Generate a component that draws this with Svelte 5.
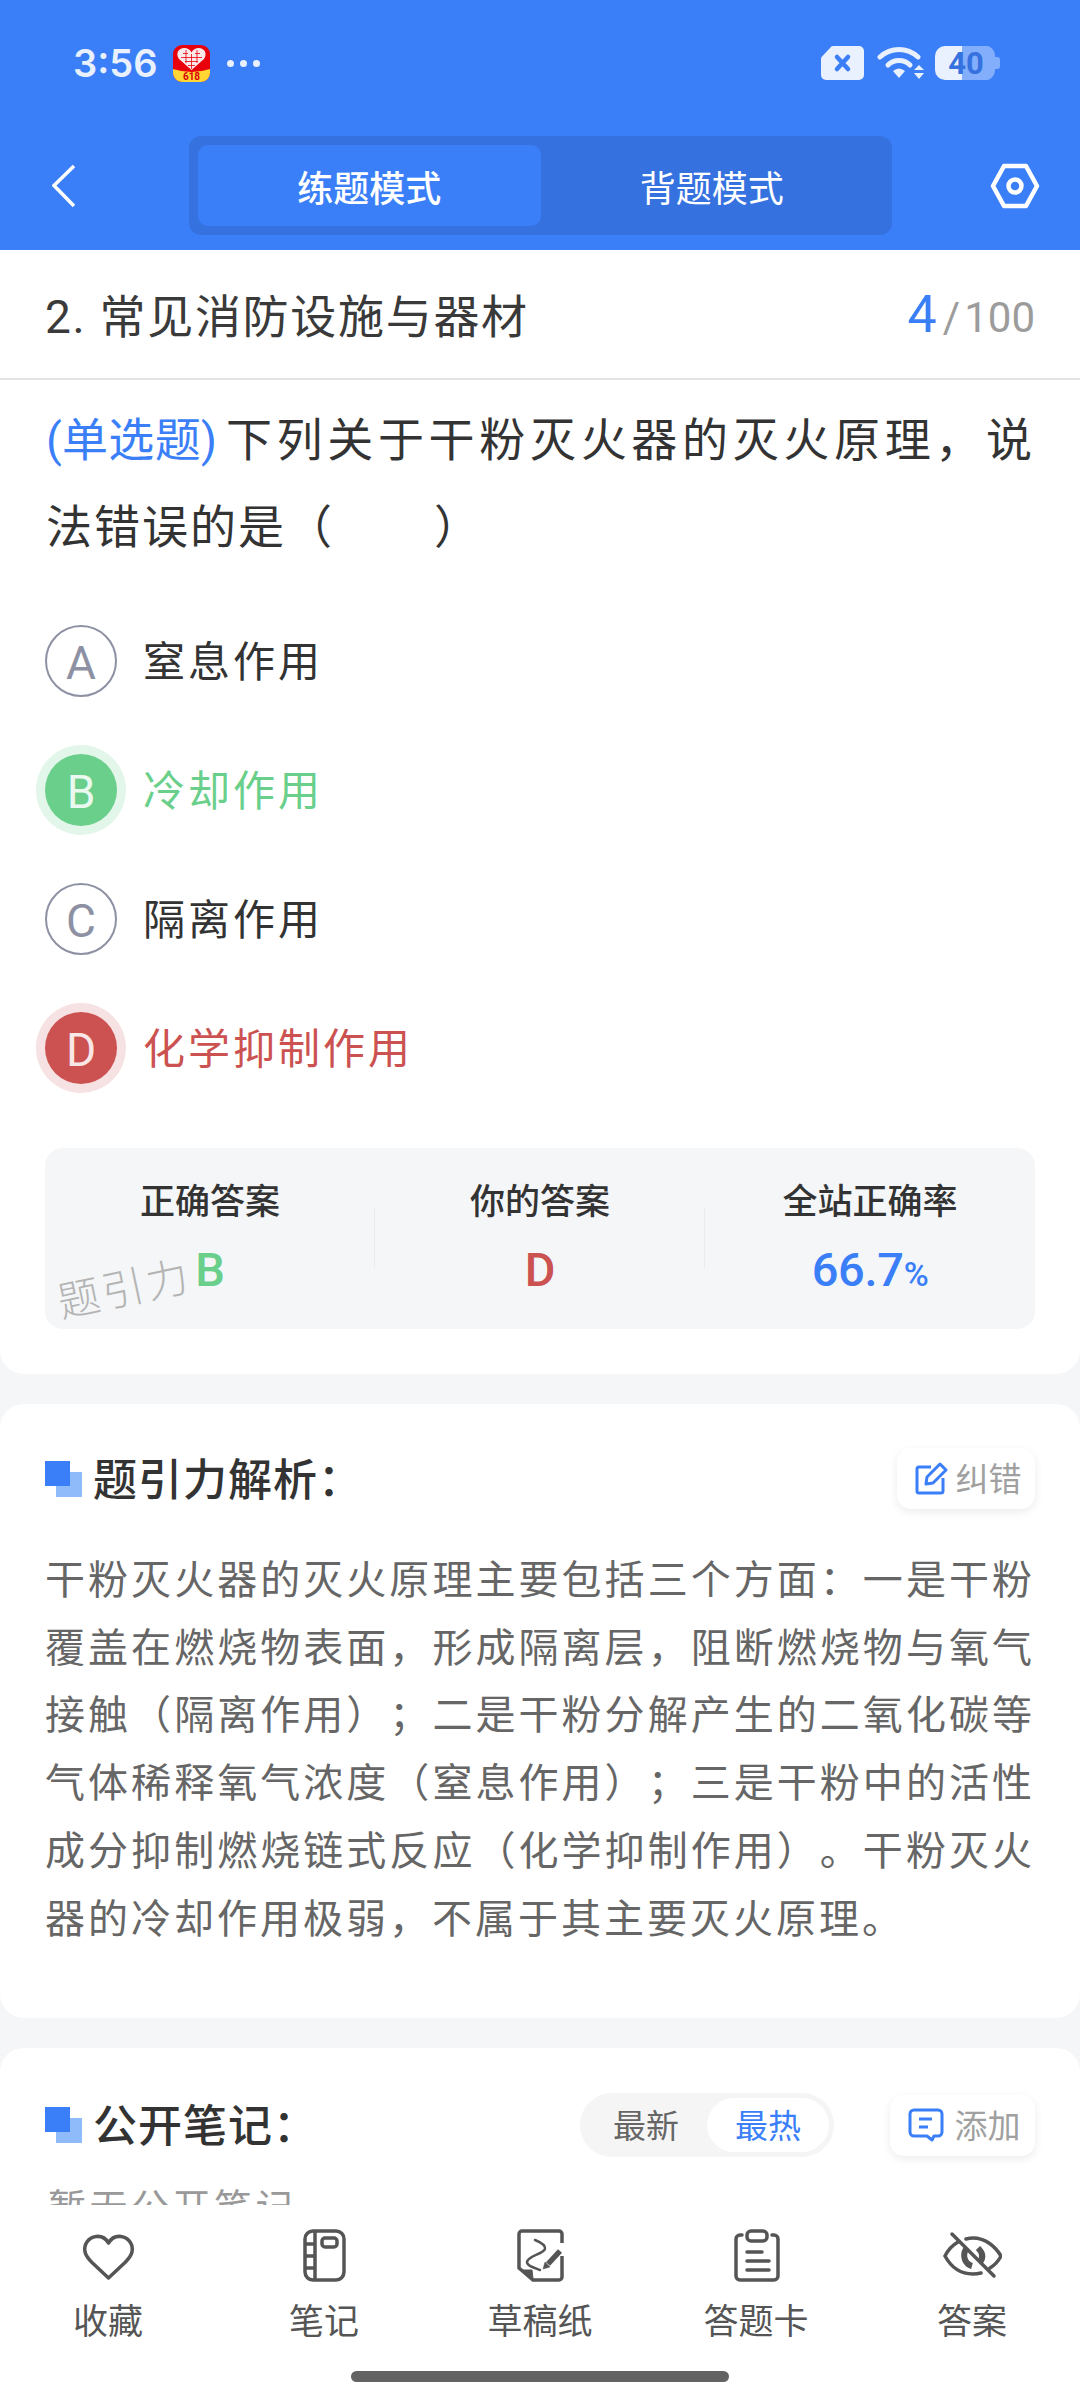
<script>
  const options = [
    { key: "A", text: "窒息作用", state: "" },
    { key: "B", text: "冷却作用", state: "right" },
    { key: "C", text: "隔离作用", state: "" },
    { key: "D", text: "化学抑制作用", state: "wrong" },
  ];
  const navItems = ["收藏", "笔记", "草稿纸", "答题卡", "答案"];
</script>

<div class="page">
  <header class="header">
    <div class="status">
      <span class="time">3:56</span>
      <svg class="app-icon" width="37" height="37" viewBox="0 0 37 37">
        <rect width="37" height="37" rx="9" fill="#e8000b" />
        <path d="M0 24 Q18.500 30 37 24 V28 A9 9 0 0 1 28 37 H9 A9 9 0 0 1 0 28 Z" fill="#ffd633" />
        <path d="M18.500 25 L6 14 C2 8 6 2.500 12 3 C15 3.300 17.500 5 18.500 7.500 C19.500 5 22 3.300 25 3 C31 2.500 35 8 31 14 Z" fill="#fbe9e9" />
        <path d="M10 8.500H15M22 8.500H27M8 12.500H29M12 16.500H25M15 20.500H22M13 5V18M18.500 9V24M24 5V18" stroke="#e8000b" stroke-width="0.800" fill="none" />
        <text x="18.500" y="34.500" text-anchor="middle" class="app-num">618</text>
      </svg>
      <span class="dots"><i></i><i></i><i></i></span>
      <span class="status-right">
        <svg width="43" height="34" viewBox="0 0 43 34">
          <path d="M12 0H38A5 5 0 0 1 43 5V29A5 5 0 0 1 38 34H5A5 5 0 0 1 0 29V13A4 4 0 0 1 1.500 10L9 2A4 4 0 0 1 12 0Z" fill="#e9f0fe" />
          <path d="M16 11L27 23M27 11L16 23" stroke="#3b7ff8" stroke-width="4.500" stroke-linecap="round" />
        </svg>
        <svg class="wifi" width="47" height="34" viewBox="0 0 47 34">
          <path d="M3 11C14 1 30 1 41 11" stroke="#e9f0fe" stroke-width="5" fill="none" stroke-linecap="round" />
          <path d="M11 19C17 13 27 13 33 19" stroke="#e9f0fe" stroke-width="5" fill="none" stroke-linecap="round" />
          <path d="M16 25Q22 20 28 25L22 32Z" fill="#e9f0fe" />
          <path d="M42 19L47 24H37ZM37 27H47L42 33Z" fill="#e9f0fe" />
        </svg>
        <svg width="65" height="34" viewBox="0 0 65 34">
          <path d="M10 0H48 A10 10 0 0 1 60 10 V24 A10 10 0 0 1 48 34 H10Z" fill="#83aefb" />
          <path d="M60 11H62A3 3 0 0 1 65 14V20A3 3 0 0 1 62 23H60Z" fill="#83aefb" />
          <path d="M10 0H27V34H10A10 10 0 0 1 0 24V10A10 10 0 0 1 10 0Z" fill="#e9f0fe" />
          <text x="31" y="28" text-anchor="middle" class="batt">40</text>
        </svg>
      </span>
    </div>
    <div class="bar">
      <svg class="back" width="24" height="44" viewBox="0 0 24 44">
        <path d="M22 2L2 21.500L22 42" stroke="#fff" stroke-width="3.500" fill="none" />
      </svg>
      <div class="tabs">
        <div class="tab active">练题模式</div>
        <div class="tab">背题模式</div>
      </div>
      <svg class="hex" width="50" height="46" viewBox="0 0 50 46">
        <path d="M14 3H36L47 23L36 43H14L3 23Z" stroke="#fff" stroke-width="4.500" fill="none" stroke-linejoin="round" />
        <circle cx="25" cy="23" r="6.500" stroke="#fff" stroke-width="4.500" fill="none" />
      </svg>
    </div>
  </header>

  <main class="content">
    <section class="card first">
      <div class="title-row">
        <span class="chapter">2. 常见消防设施与器材</span>
        <span class="progress"><b>4</b><em>/</em>100</span>
      </div>
      <div class="question-wrap">
        <p class="question"><span class="qtype">(单选题)</span>下列关于干粉灭火器的灭火原理，说法错误的是（<span class="blank"></span>）</p>
        <div class="options">
          {#each options as o}
            <div class="option {o.state}">
              <span class="letter">{o.key}</span>
              <span class="option-text">{o.text}</span>
            </div>
          {/each}
        </div>
        <div class="stats">
          <div class="stat">
            <div class="stat-label">正确答案</div>
            <div class="stat-value right">B</div>
          </div>
          <div class="stat">
            <div class="stat-label">你的答案</div>
            <div class="stat-value wrong">D</div>
          </div>
          <div class="stat">
            <div class="stat-label">全站正确率</div>
            <div class="stat-value rate">66.7<small>%</small></div>
          </div>
          <span class="watermark">题引力</span>
        </div>
      </div>
    </section>

    <section class="card analysis">
      <div class="section-head">
        <span class="mark"></span>
        <h2>题引力解析：</h2>
        <button class="mini">
          <svg width="34" height="34" viewBox="0 0 34 34">
            <path d="M17 5H5A2 2 0 0 0 3 7V29A2 2 0 0 0 5 31H27A2 2 0 0 0 29 29V16" stroke="#3b7ff8" stroke-width="3" fill="none" />
            <path d="M12 22L13 15L26 2L32 8L19 21Z" stroke="#3b7ff8" stroke-width="3" fill="none" stroke-linejoin="round" />
          </svg>
          <span class="mini-text">纠错</span>
        </button>
      </div>
      <p class="explain">干粉灭火器的灭火原理主要包括三个方面：一是干粉覆盖在燃烧物表面，形成隔离层，阻断燃烧物与氧气接触（隔离作用）；二是干粉分解产生的二氧化碳等气体稀释氧气浓度（窒息作用）；三是干粉中的活性成分抑制燃烧链式反应（化学抑制作用）。干粉灭火器的冷却作用极弱，不属于其主要灭火原理。</p>
    </section>

    <section class="card notes">
      <div class="section-head">
        <span class="mark"></span>
        <h2>公开笔记：</h2>
        <div class="toggle">
          <span>最新</span>
          <span class="on">最热</span>
        </div>
        <button class="mini add">
          <svg width="36" height="34" viewBox="0 0 36 34">
            <path d="M6 2H30A4 4 0 0 1 34 6V24A4 4 0 0 1 30 28H26L24 32L19 28H6A4 4 0 0 1 2 24V6A4 4 0 0 1 6 2Z" stroke="#3b7ff8" stroke-width="3" fill="none" stroke-linejoin="round" />
            <path d="M11 11H24M11 19H20" stroke="#3b7ff8" stroke-width="3" />
          </svg>
          <span class="mini-text">添加</span>
        </button>
      </div>
      <p class="empty">暂无公开笔记</p>
    </section>
  </main>

  <nav class="nav">
    <div class="nav-items">
      {#each navItems as label, i}
        <div class="nav-item">
          <svg width="60" height="60" viewBox="0 0 60 60" fill="none" stroke="#555" stroke-width="3.500">
            {#if i === 0}
              <path d="M30.500 17C27 11 22 10 18 10.500C10 11.500 5.500 19 7 26C8 30 11 33.500 14 36.500L30.500 52L47 36.500C50 33.500 53 30 54 26C55.500 19 51 11.500 43 10.500C39 10 34 11 30.500 17Z" stroke-linejoin="round" />
            {:else if i === 1}
              <rect x="11" y="5" width="39" height="49" rx="8" />
              <path d="M21 5V54M11 18H21M11 30H21M11 42H21" />
              <rect x="28" y="12" width="15" height="9" rx="3" />
            {:else if i === 2}
              <path d="M52 17V8A3 3 0 0 0 49 5H12A3 3 0 0 0 9 8V42L23 54H49A3 3 0 0 0 52 51V30" />
              <path d="M11 44H22L23 53Z" fill="#555" stroke-width="1" />
              <path d="M25 14C30 16 36 19 35 23C33 28 18 30 17 36C17 40 25 42 30 44" stroke-width="2.500" stroke-linecap="round" />
              <path d="M38 38L50 25" stroke-width="5.500" />
              <path d="M33 43L35 36L40 41Z" fill="#555" stroke-width="0.500" />
            {:else if i === 3}
              <path d="M16 9H14A4 4 0 0 0 10 13V50A4 4 0 0 0 14 54H48A4 4 0 0 0 52 50V13A4 4 0 0 0 48 9H46" stroke-linecap="round" />
              <rect x="21" y="5" width="20" height="10" rx="4" />
              <path d="M21 26H36M21 35H43M21 44H43" stroke-linecap="round" />
            {:else}
              <path d="M16 16C9 20 5 26 3 30C9 41 17 48 31 48C34 48 37 47.500 39 47M24 13C26 12.500 29 12 31 12C43 12 53 20 59 30C57 34 53 39 48 42" stroke-linecap="round" />
              <path d="M24 23C20 30 23 38 30 40M36 22C40 26 42 31 38 36" stroke-width="6" />
              <path d="M10 8L52 50" stroke-linecap="round" />
            {/if}
          </svg>
          <span>{label}</span>
        </div>
      {/each}
    </div>
    <div class="home-line"></div>
  </nav>
</div>

<style>
  :global(body) {
    margin: 0;
    background: #f4f6f8;
  }

  .page {
    width: 1080px;
    height: 2400px;
    display: flex;
    flex-direction: column;
    overflow: hidden;
    background: #f4f6f8;
    font-family: Roboto, "Noto Sans CJK SC", sans-serif;
    color: #333;
    text-spacing-trim: space-all;
  }

  .header {
    height: 250px;
    flex-shrink: 0;
    background: #3b7ff8;
  }

  .status {
    height: 126px;
    display: flex;
    align-items: center;
    padding: 0 80px 0 73px;
    box-sizing: border-box;
  }

  .time {
    font-family: Inter, sans-serif;
    font-size: 38px;
    font-weight: 600;
    color: #e9f0fe;
    width: 100px;
  }

  .app-num {
    font-family: Roboto, sans-serif;
    font-size: 10px;
    font-weight: 700;
    fill: #d9000b;
  }

  .dots {
    display: flex;
    gap: 6px;
    margin-left: 17px;
  }

  .dots i {
    width: 7px;
    height: 7px;
    border-radius: 50%;
    background: #e9f0fe;
  }

  .status-right {
    margin-left: auto;
    display: flex;
    align-items: center;
  }

  .wifi {
    margin: 0 11px 0 13px;
  }

  .batt {
    font-family: Roboto, sans-serif;
    font-size: 31px;
    font-weight: 700;
    fill: #3572df;
  }

  .bar {
    height: 99px;
    margin-top: 10px;
    display: flex;
    align-items: center;
    padding: 0 40px 0 52px;
  }

  .back {
    flex-shrink: 0;
  }

  .tabs {
    width: 703px;
    height: 99px;
    margin-left: 113px;
    padding: 9px;
    box-sizing: border-box;
    display: flex;
    background: #3572df;
    border-radius: 12px;
  }

  .tab {
    flex: 1;
    display: flex;
    align-items: center;
    justify-content: center;
    font-size: 36px;
    color: #fff;
    border-radius: 10px;
  }

  .tab.active {
    background: #3b7ff8;
    font-weight: 500;
  }

  .hex {
    margin-left: auto;
  }

  .content {
    flex: 1;
    min-height: 0;
    overflow: hidden;
  }

  .card {
    background: #fff;
    border-radius: 24px;
    margin-bottom: 30px;
  }

  .first {
    border-radius: 0 0 24px 24px;
    padding-bottom: 45px;
  }

  .title-row {
    height: 130px;
    box-sizing: border-box;
    padding: 0 45px 0 46px;
    border-bottom: 2px solid #e4e4e4;
    display: flex;
    align-items: center;
    justify-content: space-between;
  }

  .chapter {
    font-size: 46px;
    letter-spacing: 1.700px;
    color: #3a3a3a;
    margin: -3px 0 0 -1px;
  }

  .progress {
    font-size: 42px;
    color: #9c9c9c;
    display: flex;
    align-items: baseline;
  }

  .progress b {
    font-size: 52px;
    font-weight: 400;
    color: #3b7ff8;
    margin-right: 6px;
  }

  .progress em {
    font-style: normal;
    margin-right: 4px;
  }

  .question-wrap {
    padding: 17px 0 0 46px;
  }

  .question {
    margin: 0;
    width: 988px;
    font-size: 46px;
    line-height: 87px;
    letter-spacing: 2px;
    color: #333;
    text-align: justify;
  }

  .qtype {
    display: inline-block;
    color: #3b7ff8;
    letter-spacing: 0.300px;
    margin-right: 6px;
  }

  .blank {
    display: inline-block;
    width: 100px;
  }

  .options {
    margin-top: 54px;
    display: flex;
    flex-direction: column;
    gap: 57px;
  }

  .option {
    display: flex;
    align-items: center;
    gap: 26px;
    height: 72px;
    font-size: 42px;
    letter-spacing: 3px;
    color: #333;
  }

  .option-text {
    margin-top: -5px;
  }

  .letter {
    width: 72px;
    height: 72px;
    margin-left: -1px;
    padding-top: 3px;
    box-sizing: border-box;
    border: 2px solid #8d91a3;
    border-radius: 50%;
    display: flex;
    align-items: center;
    justify-content: center;
    font-size: 46px;
    letter-spacing: 0;
    font-weight: 400;
    color: #8d91a3;
    flex-shrink: 0;
  }

  .option.right {
    color: #69cf8b;
  }

  .option.right .letter {
    border: 0;
    background: #69cf8b;
    color: #e9f9ef;
    box-shadow: 0 0 0 9px #e3f6ea;
  }

  .option.wrong {
    color: #cb5250;
  }

  .option.wrong .letter {
    border: 0;
    background: #cb5250;
    color: #f9e6e6;
    box-shadow: 0 0 0 9px #f6e2e2;
  }

  .stats {
    margin: 64px 0 0 -1px;
    height: 181px;
    width: 990px;
    background: #f4f6f8;
    border-radius: 18px;
    display: grid;
    grid-template-columns: repeat(3, 1fr);
    position: relative;
    overflow: hidden;
  }

  .stat {
    display: flex;
    flex-direction: column;
    align-items: center;
    padding-top: 32px;
    position: relative;
  }

  .stat + .stat::before {
    content: "";
    position: absolute;
    left: -1px;
    top: 60px;
    height: 60px;
    width: 1px;
    background: #e9ebee;
  }

  .stat-label {
    font-size: 35px;
    line-height: 46px;
    font-weight: 500;
    color: #333;
  }

  .stat-value {
    margin-top: 14px;
    font-size: 47px;
    line-height: 60px;
    font-weight: 500;
    letter-spacing: -0.3px;
  }

  .stat-value.right {
    color: #69cf8b;
  }

  .stat-value.wrong {
    color: #cb5250;
  }

  .stat-value.rate {
    color: #3b7ff8;
  }

  .stat-value small {
    font-size: 34px;
  }

  .watermark {
    position: absolute;
    left: 12px;
    top: 117px;
    font-size: 42px;
    line-height: 50px;
    font-weight: 300;
    color: #b4b4b4;
    transform: rotate(-12deg);
    letter-spacing: 3px;
  }

  .analysis {
    padding: 44px 45px 65px 46px;
  }

  .section-head {
    height: 61px;
    display: flex;
    align-items: center;
    position: relative;
  }

  .section-head h2 {
    margin: -4px 0 0 47px;
    font-size: 44px;
    font-weight: 500;
    color: #333;
    letter-spacing: 1px;
    white-space: nowrap;
  }

  .mark {
    position: absolute;
    left: -1px;
    top: 13px;
    width: 25px;
    height: 25px;
    background: #3b7ff8;
  }

  .mark::after {
    content: "";
    position: absolute;
    left: 11px;
    top: 11px;
    width: 26px;
    height: 25px;
    background: #8fbbfb;
    z-index: 0;
  }

  .mark::before {
    content: "";
    position: absolute;
    inset: 0;
    background: #3b7ff8;
    z-index: 1;
  }

  .mini {
    margin-left: auto;
    height: 61px;
    width: 138px;
    padding: 0 0 0 3px;
    border: 0;
    border-radius: 14px;
    background: #fff;
    box-shadow: 0 3px 10px rgba(0, 0, 0, 0.08);
    display: flex;
    align-items: center;
    justify-content: center;
    gap: 8px;
    font-family: inherit;
    font-size: 33px;
    color: #a0a0a0;
  }

  .mini-text {
    margin-top: -3px;
  }

  .explain {
    margin: 38px 0 0 -1px;
    font-size: 40px;
    line-height: 67.700px;
    letter-spacing: 3px;
    color: #666;
    text-align: justify;
  }

  .notes {
    padding: 45px 45px 0 46px;
    margin-bottom: 0;
  }

  .notes .section-head {
    height: 64px;
  }

  .notes .mark {
    top: 14px;
  }

  .toggle {
    position: absolute;
    left: 534px;
    top: 0;
    width: 254px;
    height: 64px;
    box-sizing: border-box;
    padding: 5px;
    border-radius: 32px;
    background: #f5f5f5;
    display: flex;
    align-items: center;
    font-size: 33px;
    color: #666;
  }

  .toggle span {
    flex: 1;
    height: 52px;
    padding-bottom: 2px;
    display: flex;
    align-items: center;
    justify-content: center;
    border-radius: 27px;
  }

  .toggle .on {
    flex: 0 0 122px;
    background: #fff;
    color: #3b7ff8;
  }

  .mini.add {
    width: 145px;
    gap: 11px;
  }

  .empty {
    margin: 26px 0 0 2px;
    font-size: 38px;
    line-height: 50px;
    letter-spacing: 3.500px;
    color: #999;
  }

  .nav {
    height: 195px;
    flex-shrink: 0;
    background: #fff;
    position: relative;
    z-index: 1;
  }

  .nav-items {
    display: grid;
    grid-template-columns: repeat(5, 1fr);
    padding-top: 21px;
  }

  .nav-item {
    display: flex;
    flex-direction: column;
    align-items: center;
    font-size: 35px;
    line-height: 44px;
    color: #555;
  }

  .nav-item span {
    margin-top: 15px;
  }

  .home-line {
    position: absolute;
    left: 351px;
    top: 166px;
    width: 378px;
    height: 11px;
    border-radius: 6px;
    background: #636363;
  }
</style>
